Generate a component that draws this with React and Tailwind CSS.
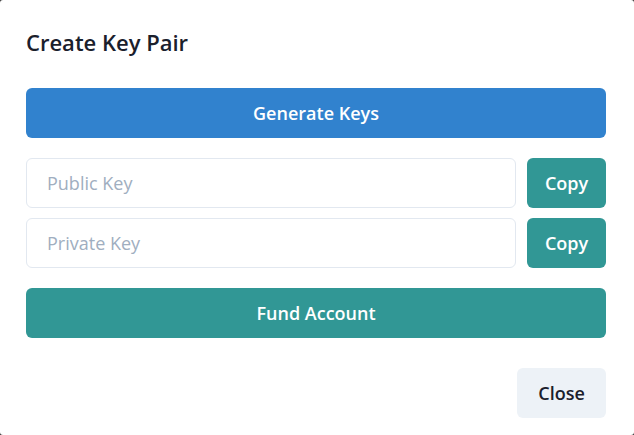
export default function App() {
  return (
    <div className="w-[634px] h-[435px] bg-[#3a3a3a]" style={{ fontFamily: '"Open Sans", "Noto Sans", sans-serif' }}>
      <div className="w-full h-full bg-white rounded-[3px] flex flex-col">
        <h2 className="pl-[26px] pt-[27px] h-[88px] text-[22px] font-semibold text-[#1a202c] leading-[30px]">Create Key Pair</h2>
        <div className="pl-[26px] pr-[28px] flex flex-col">
          <button className="h-[50px] w-full rounded-md bg-[#3182ce] text-white text-lg font-semibold">Generate Keys</button>
          <div className="mt-5 flex flex-col gap-[10px]">
            <div className="flex gap-[11px]">
              <input
                placeholder="Public Key"
                className="flex-1 min-w-0 h-[50px] rounded-md border border-[#e2e8f0] pl-5 text-lg text-[#1a202c] placeholder:text-[#a0aec0] outline-none"
              />
              <button className="w-[79px] h-[50px] rounded-md bg-[#319795] text-white text-lg font-semibold">Copy</button>
            </div>
            <div className="flex gap-[11px]">
              <input
                placeholder="Private Key"
                className="flex-1 min-w-0 h-[50px] rounded-md border border-[#e2e8f0] pl-5 text-lg text-[#1a202c] placeholder:text-[#a0aec0] outline-none"
              />
              <button className="w-[79px] h-[50px] rounded-md bg-[#319795] text-white text-lg font-semibold">Copy</button>
            </div>
          </div>
          <button className="mt-5 h-[50px] w-full rounded-md bg-[#319795] text-white text-lg font-semibold">Fund Account</button>
        </div>
        <div className="pr-[28px] pt-[30px] flex justify-end">
          <button className="w-[89px] h-[50px] rounded-md bg-[#edf2f7] text-[#1a202c] text-lg font-semibold">Close</button>
        </div>
      </div>
    </div>
  );
}
